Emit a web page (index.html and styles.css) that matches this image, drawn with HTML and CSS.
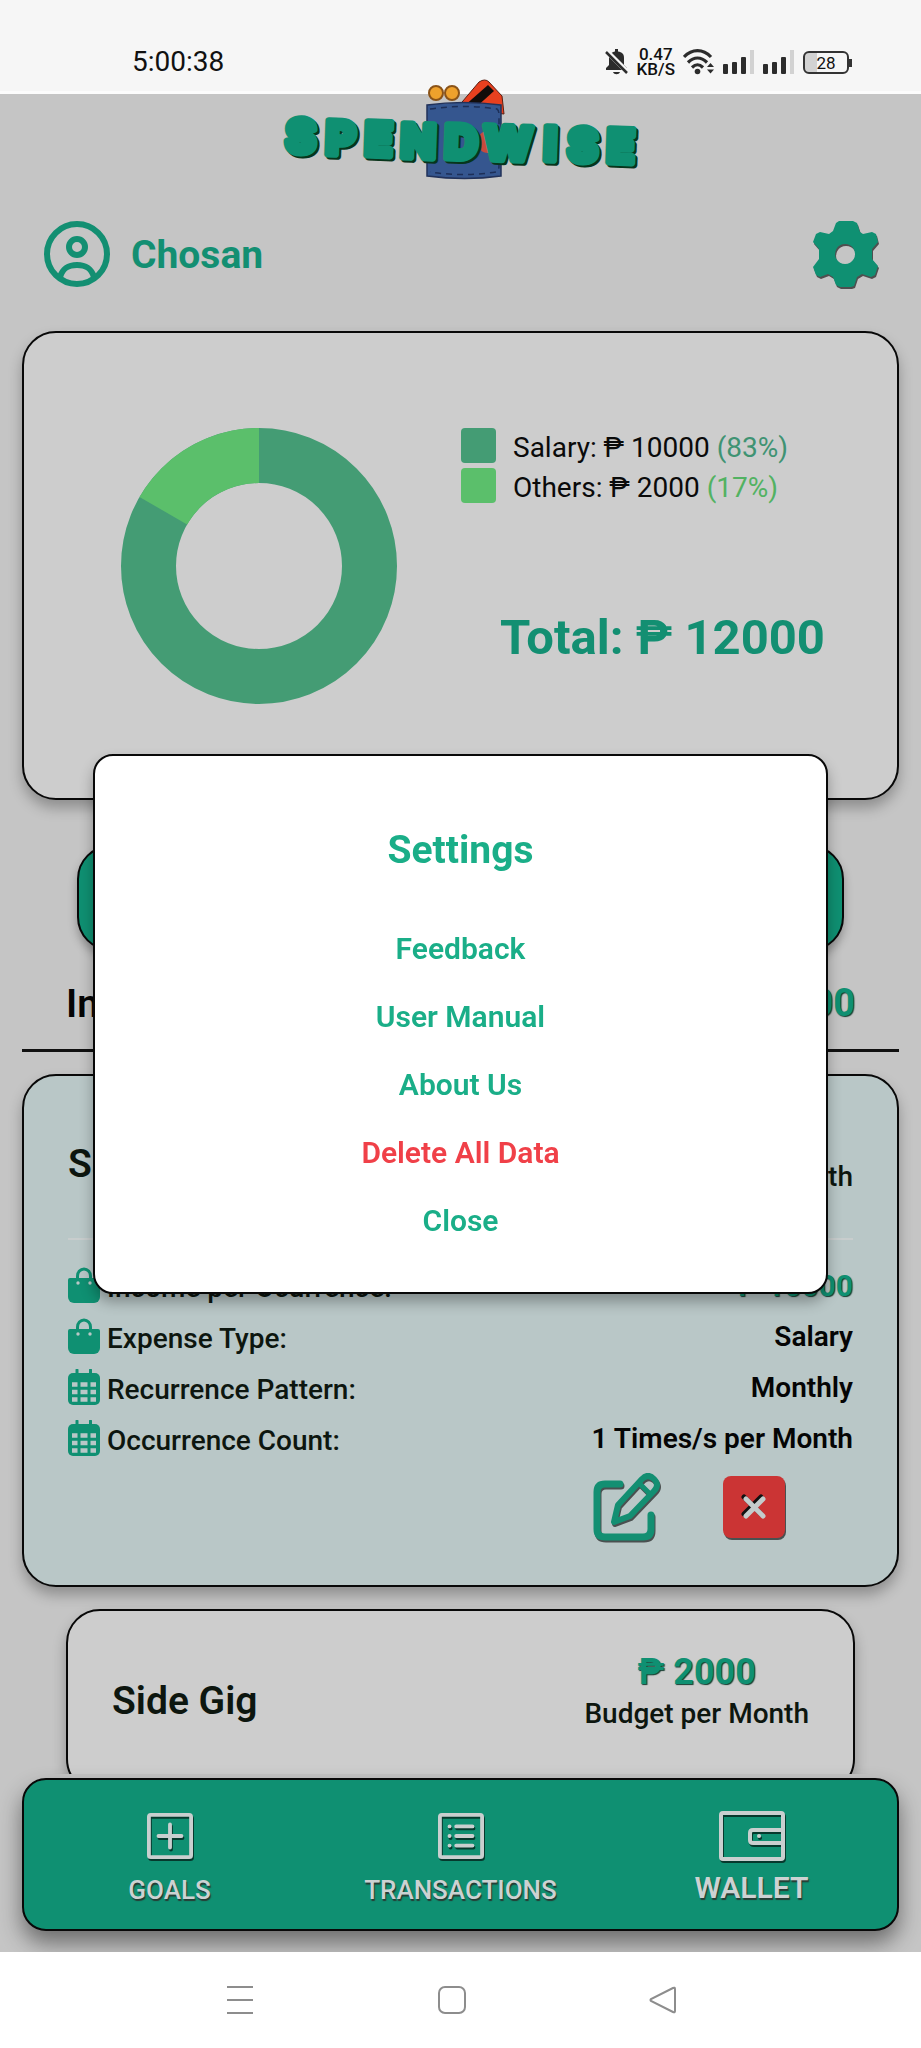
FILE: index.html
```html
<!DOCTYPE html>
<html lang="en">
<head>
<meta charset="utf-8">
<meta name="viewport" content="width=device-width, initial-scale=1">
<title>SpendWise</title>
<link rel="stylesheet" href="styles.css">
</head>
<body>
<svg class="defs" aria-hidden="true">
  <symbol id="bag" viewBox="0 0 32 36">
    <path d="M9.500 14V9a6.500 7 0 0 1 13 0V14" fill="none" stroke="currentColor" stroke-width="3"/>
    <path d="M2 11h28a2 2 0 0 1 2 2v17a6 6 0 0 1-6 6H6a6 6 0 0 1-6-6V13a2 2 0 0 1 2-2z" fill="currentColor"/>
    <circle cx="10" cy="16" r="1.700" fill="#b9c7c7"/><circle cx="22" cy="16" r="1.700" fill="#b9c7c7"/>
  </symbol>
  <symbol id="calendar" viewBox="0 0 32 36">
    <path d="M9 1v6M22.500 1v6" stroke="currentColor" stroke-width="3" stroke-linecap="round"/>
    <rect y="4" width="32" height="32" rx="5" fill="currentColor"/>
    <path d="M4 15.500h24M4 23h24M4 30.500h24" stroke="#b9c7c7" stroke-width="4.500" stroke-dasharray="5.500 3 7 3 5.500 0"/>
  </symbol>
</svg>

<div class="status">
  <time>5:00:38</time>
  <div class="status-icons">
    <svg width="24" height="26" viewBox="0 0 24 26"><path d="M1 21V19l3-3V9c0-4 3-6 6-6.500V0h3v2.500C17 3 19 5 19 9v7l3 3v2zM8 23h7c-1 3-6 3-7 0z" fill="#2c2c2c"/><path d="M1 1.500l22 22" stroke="#f6f6f6" stroke-width="5"/><path d="M1 3l21 21" stroke="#2c2c2c" stroke-width="2.500"/></svg>
    <span class="rate"><span>0.47</span><span>KB/S</span></span>
    <svg width="32" height="26" viewBox="0 0 32 26"><g fill="none" stroke="#2c2c2c" stroke-width="3.200"><path d="M1 8c8-8.500 19-8.500 27 0"/><path d="M5 13.500c6-6 13-6 19 0"/><path d="M9 18.500c4-3.800 7-3.800 11 0"/></g><circle cx="14.500" cy="22.500" r="2.800" fill="#2c2c2c"/><path d="M24 18l3.500-4 3.500 4zM24 20.500h7l-3.500 4z" fill="#2c2c2c"/></svg>
    <svg width="32" height="24" viewBox="0 0 32 24"><g fill="#2c2c2c"><rect y="14" width="5" height="10" rx="1"/><rect x="9" y="12" width="5" height="12" rx="1"/><rect x="18" y="7" width="5" height="17" rx="1"/></g><rect x="27" width="4" height="24" fill="#d2d2d2"/></svg>
    <svg width="32" height="24" viewBox="0 0 32 24"><g fill="#2c2c2c"><rect y="14" width="5" height="10" rx="1"/><rect x="9" y="12" width="5" height="12" rx="1"/><rect x="18" y="7" width="5" height="17" rx="1"/></g><rect x="27" width="4" height="24" fill="#d2d2d2"/></svg>
    <span class="battery">28</span>
  </div>
</div>

<div class="app">
  <svg class="logo" width="360" height="110" viewBox="0 0 360 110" role="img" aria-label="SpendWise">
    <path d="M176 30L198 4q6-4 10 0l13 14 2 18z" fill="#e8401f" stroke="#5a1f12" stroke-width="1"/>
    <path d="M182 29l25-22 6 6-20 18z" fill="#120c0a"/>
    <circle cx="155" cy="15" r="7" fill="#eea12c" stroke="#8a5318" stroke-width="2"/>
    <circle cx="171" cy="15" r="7" fill="#eea12c" stroke="#8a5318" stroke-width="2"/>
    <path d="M146 27q36-5 74 0v71q-36 5-74 0z" fill="#35568f" stroke="#22325a" stroke-width="1.500"/>
    <path d="M149 31q34-5 67 0 2 1 2 6v50q0 7-3 7-33 5-66 0" fill="none" stroke="#1d2f58" stroke-width="1.500" stroke-dasharray="6 5"/>
    <circle cx="207" cy="64" r="11" fill="#c84a3c"/>
    <path d="M203 53h17" fill="none" stroke="#b43c30" stroke-width="3"/>
    <g class="logo-text">
      <text class="logo-shade" y="75" x="6 46 85 121 165 204 264 288 327" dy="1 2 1 2 1 1 1 1 1" rotate="2">SPENDWISE</text>
      <text class="logo-face" y="73" x="4 44 83 119 163 202 262 286 325" dy="1 2 1 2 1 1 1 1 1" rotate="2">SPENDWISE</text>
    </g>
  </svg>

  <header class="profile">
    <svg width="66" height="66" viewBox="0 0 66 66" fill="none" stroke="#138f72" stroke-width="6"><circle cx="33" cy="33" r="30"/><circle cx="33" cy="26" r="8"/><path d="M16 56c3-9 8-12 17-12s14 3 17 12"/></svg>
    <h1>Chosan</h1>
    <button class="icon-button" aria-label="Settings"><svg class="lift" width="66" height="68" viewBox="0 0 66 68"><path fill="#0f9072" fill-rule="evenodd" d="M26 1h14l4 2 3 9 3 2 9-2 4 2 2 8-6 7v10l6 7-3 9-4 2-9-3-5 3-3 9-3 1H27l-4-2-3-8-5-3-8 3-4-2-3-8 6-8V29l-6-7 3-8 4-2 9 2 4-3 3-8zM32 24a10 10 0 1 0 .1 0z"/></svg></button>
  </header>

  <main class="scroll">
    <section class="card summary">
      <svg class="donut" viewBox="0 0 276 276" role="img" aria-label="Salary 83%, others 17%">
        <circle cx="138" cy="138" r="110.500" fill="none" stroke="#449c74" stroke-width="55"/>
        <path d="M138 0A138 138 0 0 0 18.500 69L66.100 96.500A83 83 0 0 1 138 55z" fill="#5bbf6b"/>
      </svg>
      <div class="figures">
        <ul class="legend">
          <li class="salary"><i></i><span>Salary: ₱ 10000 <em>(83%)</em></span></li>
          <li class="others"><i></i><span>Others: ₱ 2000 <em>(17%)</em></span></li>
        </ul>
        <p class="total">Total: ₱ 12000</p>
      </div>
    </section>

    <button class="add">Add Income</button>

    <div class="heading">
      <h2>Income</h2>
      <strong class="amount">₱ 12000</strong>
    </div>

    <section class="card income">
      <div class="income-head">
        <h3>Salary</h3>
        <div class="budget"><strong class="amount">₱ 10000</strong><span>Budget per Month</span></div>
      </div>
      <dl class="details">
        <div><dt><svg><use href="#bag"/></svg>Income per Ocurrence:</dt><dd class="money">₱ 10000</dd></div>
        <div><dt><svg><use href="#bag"/></svg>Expense Type:</dt><dd>Salary</dd></div>
        <div><dt><svg><use href="#calendar"/></svg>Recurrence Pattern:</dt><dd>Monthly</dd></div>
        <div><dt><svg><use href="#calendar"/></svg>Occurrence Count:</dt><dd>1 Times/s per Month</dd></div>
      </dl>
      <div class="actions">
        <button class="icon-button" aria-label="Edit"><svg class="lift" width="72" height="72" viewBox="0 0 72 72" fill="none" stroke="#138f72" stroke-width="7" stroke-linecap="round" stroke-linejoin="round"><path d="M29 13H14q-8 0-8 8v37q0 8 8 8h38q8 0 8-8V44"/><path d="M23 51l4-17L51 8q6-6 12 0t0 12L39 45z" stroke-width="6"/><path d="M48 12l11 11" stroke-width="5"/></svg></button>
        <button class="icon-button" aria-label="Delete"><svg class="lift" width="62" height="62" viewBox="0 0 62 62"><rect width="62" height="62" rx="8" fill="#cb3434"/><path d="M21 21l17 17M38 21L21 38" stroke="#111" stroke-width="5" stroke-linecap="round"/><path d="M23 23l17 17M40 23L23 40" stroke="#c4cccc" stroke-width="5" stroke-linecap="round"/></svg></button>
      </div>
    </section>

    <section class="card side">
      <h3>Side Gig</h3>
      <div class="budget"><strong class="amount">₱ 2000</strong><span>Budget per Month</span></div>
    </section>
  </main>

  <nav class="tabs">
    <a href="#goals"><svg class="lift" width="46" height="46" viewBox="0 0 48 48"><rect x="2" y="2" width="44" height="44" rx="2"/><path d="M24 12v24M12 24h24"/></svg>GOALS</a>
    <a href="#transactions"><svg class="lift" width="46" height="46" viewBox="0 0 48 48"><rect x="2" y="2" width="44" height="44" rx="2"/><path d="M19 14h17M19 24h17M19 34h17M12 14h.1M12 24h.1M12 34h.1"/></svg>TRANSACTIONS</a>
    <a class="active" href="#wallet"><svg class="lift" width="66" height="50" viewBox="0 0 66 50"><rect x="2" y="2" width="62" height="46" rx="2"/><path d="M64 19H34q-3 0-3 3v7q0 3 3 3h30"/><path d="M40 25h.1"/></svg>WALLET</a>
  </nav>
</div>

<footer class="system">
  <button class="icon-button" aria-label="Recent apps"><svg width="28" height="28" viewBox="0 0 28 28"><path d="M1 1h26M1 14h26M1 27h26"/></svg></button>
  <button class="icon-button" aria-label="Home"><svg width="28" height="28" viewBox="0 0 28 28"><rect x="1" y="1" width="26" height="26" rx="6"/></svg></button>
  <button class="icon-button" aria-label="Back"><svg width="28" height="28" viewBox="0 0 28 28"><path d="M24 2q2-1 2 1v22q0 2-2 1L2 15q-1-1 0-2z"/></svg></button>
</footer>

<div class="overlay">
  <div class="modal" role="dialog" aria-modal="true" aria-labelledby="settings-title">
    <h2 id="settings-title">Settings</h2>
    <button>Feedback</button>
    <button>User Manual</button>
    <button>About Us</button>
    <button class="danger">Delete All Data</button>
    <button>Close</button>
  </div>
</div>
</body>
</html>
```
FILE: styles.css
```css
* { box-sizing: border-box; }
body {
  margin: 0;
  height: 100vh;
  display: flex;
  flex-direction: column;
  background: #fff;
  color: #0d160f;
  font-family: Roboto, "Noto Sans", sans-serif;
  font-size: 28px;
  line-height: 34px;
}
h1, h2, h3, p, ul, dl, dd { margin: 0; padding: 0; }
h1, h2, h3 { font-size: 39px; line-height: 46px; font-weight: 600; }
button { font: inherit; padding: 0; border: 0; background: none; cursor: pointer; }
svg { display: block; flex: none; }
.defs { position: absolute; width: 0; height: 0; }
.icon-button { display: block; }
.lift { filter: drop-shadow(1px 2px 0 rgba(0, 0, 0, .6)); }

/* Status bar */
.status {
  flex: none;
  height: 94px;
  padding: 42px 72px 0 132px;
  display: flex;
  justify-content: space-between;
  background: #f6f6f6;
  border-bottom: 3px solid #fcfcfc;
  color: #111;
  font-size: 28px;
  line-height: 40px;
}
.status-icons { display: flex; align-items: center; gap: 8px; height: 40px; }
.rate { display: grid; font-size: 17px; line-height: 15px; font-weight: 500; text-align: center; }
.battery {
  position: relative;
  width: 46px;
  height: 23px;
  border: 2px solid #333;
  border-radius: 6px;
  background: linear-gradient(90deg, #d2d2d2 28%, transparent 28%);
  font-size: 17px;
  line-height: 20px;
  text-align: center;
}
.battery::after {
  content: "";
  position: absolute;
  top: 6px;
  right: -5px;
  width: 3px;
  height: 8px;
  background: #333;
}

/* App shell */
.app {
  flex: 1;
  min-height: 0;
  display: flex;
  flex-direction: column;
  background: #c5c5c5;
}
.logo { align-self: center; margin-top: -16px; position: relative; overflow: visible; }
.logo-text {
  font-family: Inter, sans-serif;
  font-size: 46px;
  font-weight: 800;
  stroke-width: 7px;
  stroke-linejoin: round;
}
.logo-shade { fill: #07351c; stroke: #07351c; }
.logo-face { fill: #0f9072; stroke: #0f9072; }
.profile {
  display: flex;
  align-items: center;
  gap: 21px;
  margin-top: 32px;
  padding: 0 42px 0 44px;
  color: #138f72;
}
.profile h1 { padding-top: 2px; font-weight: 700; }
.profile .icon-button { margin-left: auto; }

/* Scrolling content */
.scroll {
  flex: 1;
  min-height: 0;
  margin-top: 23px;
  padding: 20px 22px 0;
  overflow: hidden;
  display: flex;
  flex-direction: column;
}
.scroll > * { flex: none; }
.card {
  border: 2px solid #080808;
  border-radius: 34px;
  background: #cdcdcd;
  box-shadow: 0 8px 14px rgba(0, 0, 0, .28);
}
.summary { display: flex; padding: 95px 72px 94px 97px; }
.donut { width: 276px; height: 276px; }
.figures { flex: 1; margin-left: 64px; }
.legend { list-style: none; display: grid; gap: 6px; color: #0a0a0a; }
.legend li { display: flex; align-items: center; gap: 17px; height: 34px; }
.legend i { width: 35px; height: 35px; border-radius: 4px; }
.legend span { padding-top: 6px; }
.legend em { font-style: normal; }
.salary i { background: #449c74; }
.salary em { color: #3f9373; }
.others i { background: #5bbf6b; }
.others em { color: #52b262; }
.total {
  margin-top: 106px;
  text-align: right;
  font-size: 49px;
  line-height: 60px;
  font-weight: 700;
  color: #138f72;
}
.add {
  height: 106px;
  margin: 45px 55px 0;
  border: 2px solid #080808;
  border-radius: 34px;
  background: #0f9072;
  box-shadow: 0 6px 10px rgba(0, 0, 0, .28);
  color: #cdcdcd;
  font-size: 38px;
}
.heading {
  display: flex;
  justify-content: space-between;
  margin-top: 30px;
  padding: 0 44px 22px;
  border-bottom: 3px solid #111;
  color: #050505;
}
.amount {
  font-size: 36px;
  line-height: 44px;
  font-weight: 700;
  color: #0f9072;
  text-shadow: 1px 1px 1px #163d31;
}
.heading .amount { font-size: 38px; }
.income { margin-top: 22px; padding: 37px 44px 42px; background: #b9c7c7; }
.income-head {
  display: flex;
  align-items: center;
  justify-content: space-between;
  padding-bottom: 44px;
  border-bottom: 2px solid #c8cdcd;
}
.income-head h3 { padding-top: 20px; }
.budget { display: grid; gap: 3px; justify-items: center; font-weight: 500; }
.details { margin-top: 27px; display: grid; gap: 15px; }
.details div { display: flex; justify-content: space-between; height: 36px; }
.details dt { display: flex; gap: 7px; padding-top: 4px; font-weight: 500; }
.details dt svg { width: 32px; height: 36px; margin-top: -4px; color: #0f9072; }
.details dd { padding-top: 2px; font-weight: 600; color: #050505; }
.details .money { color: #0f9072; font-size: 30px; font-weight: 700; text-shadow: 1px 1px 1px #163d31; }
.actions { display: flex; justify-content: flex-end; align-items: center; gap: 60px; padding-right: 68px; margin-top: 15px; }
.side {
  display: flex;
  align-items: center;
  justify-content: space-between;
  height: 184px;
  margin: 22px 44px 0;
  padding: 0 44px;
}
.side .budget { padding-bottom: 22px; }

/* Bottom tabs */
.tabs {
  display: grid;
  grid-template-columns: repeat(3, 1fr);
  height: 153px;
  flex: none;
  position: relative;
  margin: 4px 22px 21px;
  border: 2px solid #080808;
  border-radius: 24px;
  background: #0f9072;
  box-shadow: 0 12px 22px rgba(0, 0, 0, .45);
}
.tabs a {
  display: flex;
  flex-direction: column;
  align-items: center;
  justify-content: flex-end;
  gap: 14px;
  padding-bottom: 22px;
  color: #ccd2d2;
  font-size: 26px;
  font-weight: 500;
  text-decoration: none;
  text-shadow: 1px 2px 1px #263c34;
}
.tabs .active { font-size: 30px; font-weight: 600; gap: 10px; padding-bottom: 24px; }
.tabs svg { fill: none; stroke: #c9cfcf; stroke-width: 4; stroke-linecap: round; }

/* System buttons */
.system {
  flex: none;
  position: relative;
  height: 96px;
  padding: 0 244px 0 226px;
  display: flex;
  align-items: center;
  justify-content: space-between;
  background: #fff;
}
.system svg { fill: none; stroke: #8d8d8d; stroke-width: 2; }

/* Settings dialog */
.overlay {
  position: fixed;
  inset: 0;
  display: flex;
  align-items: center;
  justify-content: center;
  padding: 0 93px;
}
.modal {
  flex: 1;
  display: flex;
  flex-direction: column;
  align-items: center;
  gap: 32px;
  padding: 71px 20px 53px;
  border: 2px solid #080808;
  border-radius: 20px;
  background: #fff;
  box-shadow: 0 8px 14px rgba(0, 0, 0, .3);
  color: #1aae88;
}
.modal h2 { margin-bottom: 26px; font-weight: 700; }
.modal button { font-size: 30px; line-height: 36px; font-weight: 600; color: #1aae88; }
.modal .danger { color: #f04048; }
```
